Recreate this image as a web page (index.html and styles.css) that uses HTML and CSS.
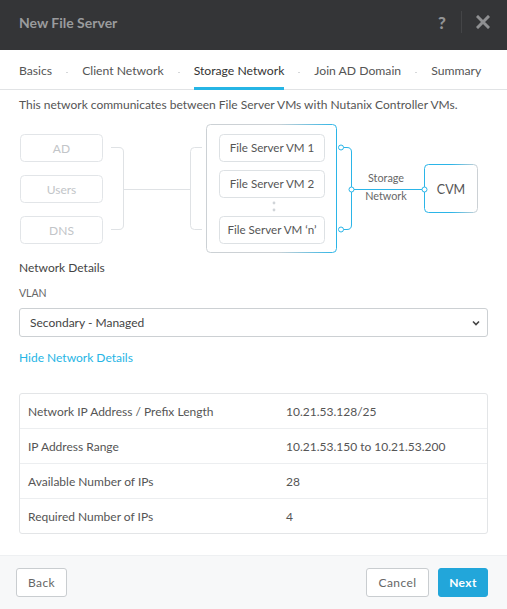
FILE: index.html
```html
<!DOCTYPE html>
<html>
<head>
<meta charset="utf-8">
<link rel="stylesheet" href="styles.css">
</head>
<body>
<div class="modal">
  <header class="header">
    <div class="title">New File Server</div>
    <div class="header-actions">
      <span class="help">?</span>
      <span class="sep"></span>
      <svg class="close" width="14" height="14" viewBox="0 0 14 14"><path d="M2 2 L12 12 M12 2 L2 12" stroke="#8f9092" stroke-width="3" stroke-linecap="square"/></svg>
    </div>
  </header>
  <nav class="tabs">
    <span class="tab">Basics</span><span class="dot"></span>
    <span class="tab">Client Network</span><span class="dot"></span>
    <span class="tab active">Storage Network</span><span class="dot"></span>
    <span class="tab">Join AD Domain</span><span class="dot"></span>
    <span class="tab">Summary</span>
  </nav>
  <main class="content">
    <p class="desc">This network communicates between File Server VMs with Nutanix Controller VMs.</p>
    <svg class="diagram" width="469" height="136" viewBox="0 0 469 136">
      <defs>
        <linearGradient id="gc" x1="0" y1="0" x2="1" y2="0">
          <stop offset="0" stop-color="#ccd1d5"/>
          <stop offset="0.55" stop-color="#ccd1d5"/>
          <stop offset="1" stop-color="#2bb5e8"/>
        </linearGradient>
        <linearGradient id="gv" x1="0" y1="0" x2="1" y2="0">
          <stop offset="0" stop-color="#2bb5e8"/>
          <stop offset="0.5" stop-color="#2bb5e8"/>
          <stop offset="1" stop-color="#ccd1d5"/>
        </linearGradient>
      </defs>
      <g fill="#fff" stroke="#e2e5e8">
        <rect x="1.5" y="14.5" width="82" height="27" rx="4"/>
        <rect x="1.5" y="55.5" width="82" height="27" rx="4"/>
        <rect x="1.5" y="96.5" width="82" height="27" rx="4"/>
      </g>
      <g class="t-light" text-anchor="middle">
        <text x="42.5" y="32.5">AD</text>
        <text x="42.5" y="73.5">Users</text>
        <text x="42.5" y="114.5">DNS</text>
      </g>
      <g fill="none" stroke="#dfe2e5">
        <path d="M92 27.5 H100 Q104.5 27.5 104.5 32 V105 Q104.5 109.5 100 109.5 H92"/>
        <path d="M104.5 69.5 H171.5"/>
        <path d="M183 27.5 H175.5 Q171.5 27.5 171.5 31.5 V105.5 Q171.5 109.5 175.5 109.5 H183"/>
      </g>
      <rect x="187.5" y="4.5" width="130" height="128" rx="4" fill="#fff" stroke="url(#gc)"/>
      <g fill="#fff" stroke="#dde1e4">
        <rect x="200.5" y="14.5" width="105" height="27" rx="4"/>
        <rect x="200.5" y="50.5" width="105" height="27" rx="4"/>
        <rect x="200.5" y="96.5" width="105" height="27" rx="4"/>
      </g>
      <g class="t-vm" text-anchor="middle">
        <text x="253" y="32">File Server VM 1</text>
        <text x="253" y="68">File Server VM 2</text>
        <text x="253" y="114">File Server VM ‘n’</text>
      </g>
      <circle cx="255" cy="83" r="1.4" fill="#d0d4d8"/>
      <circle cx="255" cy="90" r="1.4" fill="#d0d4d8"/>
      <g fill="none" stroke="#2bb5e8">
        <path d="M324.5 27.5 H328 Q332.5 27.5 332.5 32 V105 Q332.5 109.5 328 109.5 H324.5"/>
        <path d="M332.5 69.5 H405.5"/>
      </g>
      <rect x="405.5" y="44.5" width="53" height="48" rx="4" fill="#fff" stroke="url(#gv)"/>
      <g fill="#fff" stroke="#2bb5e8">
        <circle cx="322" cy="27.5" r="2.5"/>
        <circle cx="322" cy="109.5" r="2.5"/>
        <circle cx="332.5" cy="69.5" r="2.5"/>
        <circle cx="405.5" cy="69.5" r="2.5"/>
      </g>
      <g class="t-small" text-anchor="middle">
        <text x="367" y="62">Storage</text>
        <text x="367" y="80">Network</text>
      </g>
      <text class="t-cvm" x="432" y="73.5" text-anchor="middle">CVM</text>
    </svg>
    <div class="section-title">Network Details</div>
    <div class="label">VLAN</div>
    <div class="select">
      <span>Secondary - Managed</span>
      <svg width="8" height="6" viewBox="0 0 8 6"><path d="M1 1.5 L4 4.5 L7 1.5" fill="none" stroke="#444" stroke-width="1.6"/></svg>
    </div>
    <a class="link">Hide Network Details</a>
    <div class="table">
      <div class="row"><span class="k">Network IP Address / Prefix Length</span><span class="v">10.21.53.128/25</span></div>
      <div class="row"><span class="k">IP Address Range</span><span class="v">10.21.53.150 to 10.21.53.200</span></div>
      <div class="row"><span class="k">Available Number of IPs</span><span class="v">28</span></div>
      <div class="row"><span class="k">Required Number of IPs</span><span class="v">4</span></div>
    </div>
  </main>
  <footer class="footer">
    <button class="btn back">Back</button>
    <div class="right">
      <button class="btn cancel">Cancel</button>
      <button class="btn primary">Next</button>
    </div>
  </footer>
</div>
</body>
</html>
```
FILE: styles.css
```css
* { box-sizing: border-box; }
html, body { margin: 0; padding: 0; }
body {
  font-family: Lato, "Open Sans", sans-serif;
  font-size: 12px;
  color: #555;
  background: #fff;
}
.modal {
  width: 507px;
  height: 609px;
  display: flex;
  flex-direction: column;
}
.header {
  height: 50px;
  background: #343537;
  display: flex;
  align-items: center;
  justify-content: space-between;
  padding: 0 17px 6px 19px;
  flex-shrink: 0;
}
.title {
  color: #9a9b9d;
  font-weight: 700;
  font-size: 14px;
}
.header-actions {
  display: flex;
  align-items: center;
}
.help {
  color: #939496;
  font-weight: 900;
  font-size: 17px;
  width: 14px;
  text-align: center;
}
.sep {
  width: 1px;
  height: 22px;
  background: #444547;
  margin: 0 14px 0 12px;
}
.close { display: block; }
.tabs {
  height: 40px;
  border-bottom: 1px solid #e1e3e5;
  display: flex;
  align-items: center;
  padding: 0 19px;
  flex-shrink: 0;
}
.tab {
  line-height: 40px;
  color: #555;
  border-bottom: 3px solid transparent;
  margin-bottom: -1px;
  box-sizing: content-box;
  height: 36px;
  font-size: 12.2px;
}
.tab.active {
  color: #333;
  border-bottom-color: #26b5e5;
}
.dot {
  width: 2px;
  height: 1px;
  background: #d6d8da;
  margin: 6px 14px 0;
}
.content {
  flex: 1;
  padding: 0 19px;
}
.desc {
  margin: 7px 0 0;
  line-height: 16px;
}
.diagram {
  display: block;
  margin-top: 7px;
}
.diagram text { font-family: Lato, "Open Sans", sans-serif; }
.t-light { fill: #c2c5c8; font-size: 12px; }
.t-vm { fill: #555; font-size: 11.6px; }
.t-small { fill: #666; font-size: 10.8px; }
.t-cvm { fill: #555; font-size: 12.5px; }
.section-title {
  margin-top: 4px;
  color: #444;
  line-height: 16px;
}
.label {
  margin-top: 10px;
  font-size: 10.5px;
  color: #666;
  line-height: 14px;
}
.select {
  margin-top: 8px;
  height: 29px;
  border: 1px solid #ccd0d3;
  border-radius: 3px;
  display: flex;
  align-items: center;
  justify-content: space-between;
  padding: 0 7px 0 10px;
  color: #444;
}
.select svg { display: block; }
.link {
  display: block;
  margin-top: 13px;
  color: #26b5e5;
  line-height: 16px;
}
.table {
  margin-top: 27px;
  border: 1px solid #e3e5e7;
  border-radius: 3px;
}
.row {
  display: flex;
  height: 35px;
  align-items: center;
  padding: 0 8px;
  border-top: 1px solid #eceef0;
  color: #555;
}
.row:first-child { border-top: 0; height: 34px; }
.k { width: 258px; }
.footer {
  height: 54px;
  background: #f7f8f9;
  border-top: 1px solid #eef0f2;
  display: flex;
  align-items: center;
  justify-content: space-between;
  padding: 0 19px 0 16px;
  flex-shrink: 0;
}
.right { display: flex; gap: 9px; }
.btn {
  height: 29px;
  padding: 0;
  background: #fff;
  border: 1px solid #c9cdd0;
  border-radius: 3px;
  font-family: Lato, "Open Sans", sans-serif;
  font-size: 12px;
  color: #666;
  letter-spacing: 0.4px;
  text-align: center;
}
.btn.back { width: 51px; }
.btn.cancel { width: 63px; }
.btn.primary {
  width: 50px;
  background: #22a6da;
  border-color: #22a6da;
  color: #fff;
  font-weight: 700;
}
```
